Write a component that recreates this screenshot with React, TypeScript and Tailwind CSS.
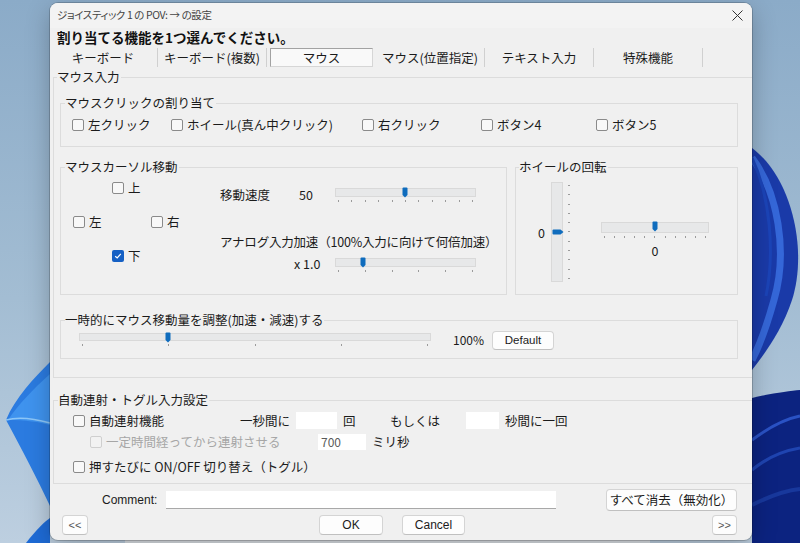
import React from "react";

function Box({ checked = false, disabled = false }: { checked?: boolean; disabled?: boolean }) {
  if (checked) {
    return (
      <span className="w-[12px] h-[12px] rounded-[2px] bg-[#1560c4] flex items-center justify-center shrink-0">
        <svg width="8" height="8" viewBox="0 0 8 8">
          <path d="M1.2 4.2 L3.2 6 L6.8 1.8" stroke="white" strokeWidth="1.2" fill="none" />
        </svg>
      </span>
    );
  }
  return (
    <span
      className={`w-[12px] h-[12px] rounded-[2px] border shrink-0 ${
        disabled ? "border-[#cfcfcf] bg-[#f2f2f2]" : "border-[#8a8a8a] bg-[#f8f8f8]"
      }`}
    />
  );
}

function Check({
  label,
  checked,
  disabled,
  className = "",
}: {
  label: string;
  checked?: boolean;
  disabled?: boolean;
  className?: string;
}) {
  return (
    <div className={`flex items-center gap-[4px] h-[16px] shrink-0 ${className}`}>
      <Box checked={checked} disabled={disabled} />
      <span className={`text-[12.5px] leading-[16px] whitespace-nowrap ${disabled ? "text-[#a6a6a6]" : "text-[#1b1b1b]"}`}>
        {label}
      </span>
    </div>
  );
}

function Group({
  label,
  className = "",
  labelClass = "left-[4px]",
  children,
}: {
  label: string;
  className?: string;
  labelClass?: string;
  children?: React.ReactNode;
}) {
  return (
    <div className={`relative border border-[#dcdcdc] shrink-0 ${className}`}>
      <span className={`absolute -top-[9px] bg-[#f0f0f0] pr-[1px] text-[12.5px] leading-[16px] whitespace-nowrap ${labelClass}`}>
        {label}
      </span>
      {children}
    </div>
  );
}

function HSlider({
  className,
  trackClass = "h-[9px]",
  pos,
  ticks,
}: {
  className: string;
  trackClass?: string;
  pos: number;
  ticks: number;
}) {
  return (
    <div className={`relative shrink-0 ${className}`}>
      <div className={`bg-[#e7e8e9] border border-[#d9d9d9] ${trackClass}`} />
      <svg className="absolute -top-[1px]" style={{ left: pos - 3 }} width="6" height="11" viewBox="0 0 6 11">
        <path d="M0.5 1.5 Q0.5 0.5 1.5 0.5 H4.5 Q5.5 0.5 5.5 1.5 V8 L3 10.5 L0.5 8 Z" fill="#0f6cbd" />
      </svg>
      <div className="flex justify-between px-[3px] mt-[3px]">
        {Array.from({ length: ticks }).map((_, i) => (
          <span key={i} className="w-px h-[2px] bg-[#9b9b9b]" />
        ))}
      </div>
    </div>
  );
}

function Btn({ className, children }: { className: string; children: React.ReactNode }) {
  return (
    <div
      className={`flex items-center justify-center bg-[#fdfdfd] border border-[#d4d4d4] border-b-[#c0c0c0] rounded-[4px] shrink-0 ${className}`}
    >
      {children}
    </div>
  );
}

function Wallpaper() {
  return (
    <svg className="absolute inset-0" width="800" height="543" viewBox="0 0 800 543">
      {/* right petal */}
      <path d="M752 148 C792 178 808 250 792 300 C782 330 766 352 752 370 Z" fill="#1a3aa8" />
      <path d="M752 158 C778 192 788 252 774 300 C767 325 760 345 752 360" stroke="#3567d8" strokeWidth="7" fill="none" />
      <path d="M752 158 C770 196 775 252 766 296" stroke="#1b44b8" strokeWidth="3" fill="none" />
      {/* bottom right */}
      <path d="M752 398 C772 393 790 391 800 390 L800 543 L752 543 Z" fill="#0c2380" />
      <path d="M752 440 C772 425 790 418 800 416" stroke="#2a52c4" strokeWidth="3" fill="none" />
      <path d="M752 470 C770 455 788 450 800 448" stroke="#1f44b0" strokeWidth="3" fill="none" />
      <path d="M752 505 C772 495 790 490 800 489" stroke="#18389c" strokeWidth="4" fill="none" />
      {/* left petal */}
      <path d="M50 362 C34 378 15 398 6 420 C20 446 38 480 50 506 Z" fill="#2b7be0" />
      <path d="M50 374 C32 390 18 405 8 420 C25 420 40 422 50 425 Z" fill="#3f93ee" />
      <path d="M6 420 C20 416 36 419 50 423" stroke="#8cc6f7" strokeWidth="1.5" fill="none" />
      <path d="M26 543 C36 530 44 522 50 518 L50 543 Z" fill="#1e6bd6" />
    </svg>
  );
}

export default function App() {
  return (
    <div className="relative w-[800px] h-[543px] overflow-hidden bg-[linear-gradient(180deg,#8babc8_0%,#a3bdd3_55%,#bdcfe0_100%)] font-['Noto_Sans_CJK_JP','Noto_Sans',sans-serif] text-[#1b1b1b]">
      <Wallpaper />
      <div className="absolute left-[125px] top-[538px] w-[525px] h-[10px] bg-[#dde2e7]" />

      {/* dialog window */}
      <div className="absolute left-[50px] top-[3px] w-[702px] h-[537px] rounded-[8px] overflow-hidden bg-[#f0f0f0] shadow-[0_0_0_1px_rgba(0,0,0,0.18),0_8px_24px_rgba(0,0,0,0.25)] flex flex-col">
        {/* title bar */}
        <div className="h-[25px] shrink-0 bg-[#f3f3f3] flex items-center justify-between pl-[7px] pr-[9px]">
          <span className="text-[10.5px] leading-[14px] text-[#444] [font-feature-settings:'palt'] tracking-[-0.4px] -mt-[1px]">
            ジョイスティック 1 の POV: → の設定
          </span>
          <svg width="11" height="11" viewBox="0 0 11 11" className="-mt-[1px]">
            <path d="M0.5 0.5 L10.5 10.5 M10.5 0.5 L0.5 10.5" stroke="#333" strokeWidth="1" />
          </svg>
        </div>

        {/* heading */}
        <div className="h-[19px] shrink-0 pl-[7px] text-[13.5px] leading-[19px] font-bold text-[#111]">
          割り当てる機能を1つ選んでください。
        </div>

        {/* tabs */}
        <div className="mt-[1px] ml-[-1px] h-[19px] shrink-0 flex text-[12.5px] leading-[16px]">
          <div className="w-[109px] flex items-center justify-center border-r border-[#d0d0d0]">キーボード</div>
          <div className="w-[109px] flex items-center justify-center border-r border-[#d0d0d0]">キーボード(複数)</div>
          <div className="w-[109px] flex items-center">
            <div className="ml-[3px] w-[103px] h-[19px] flex items-center justify-center border border-[#a2a2a2] border-r-[#d6d6d6] border-b-[#d6d6d6] bg-[#f9f9f9]">
              マウス
            </div>
          </div>
          <div className="w-[109px] flex items-center justify-center border-r border-[#d0d0d0]">マウス(位置指定)</div>
          <div className="w-[109px] flex items-center justify-center border-r border-[#d0d0d0]">テキスト入力</div>
          <div className="w-[109px] flex items-center justify-center border-r border-[#d0d0d0]">特殊機能</div>
        </div>

        {/* マウス入力 outer group */}
        <Group label="マウス入力" className="mt-[10px] ml-[3px] w-[701px] h-[301px] flex flex-col" labelClass="left-[3px]">
          {/* click assignment */}
          <Group label="マウスクリックの割り当て" className="mt-[25px] ml-[6px] w-[678px] h-[44px]">
            <div className="mt-[13px] pl-[11px] flex">
              <Check label="左クリック" className="w-[99px]" />
              <Check label="ホイール(真ん中クリック)" className="w-[191px]" />
              <Check label="右クリック" className="w-[119px]" />
              <Check label="ボタン4" className="w-[115px]" />
              <Check label="ボタン5" />
            </div>
          </Group>

          {/* cursor + wheel */}
          <div className="mt-[20px] ml-[6px] flex gap-[8px]">
            <Group label="マウスカーソル移動" className="w-[447px] h-[128px] flex">
              <div className="w-[159px] shrink-0 pl-[12px] pt-[12px]">
                <div className="grid grid-cols-[39px_39px_39px] grid-rows-[16px_16px_16px] gap-y-[18px]">
                  <div />
                  <Check label="上" />
                  <div />
                  <Check label="左" />
                  <div />
                  <Check label="右" />
                  <div />
                  <Check label="下" checked />
                  <div />
                </div>
              </div>
              <div className="flex-1 pt-[19px] text-[12.5px] leading-[16px]">
                <div className="h-[20px] flex items-start">
                  <span className="w-[79px] shrink-0">移動速度</span>
                  <span className="w-[36px] shrink-0">50</span>
                  <HSlider className="w-[141px] mt-[1px]" pos={70} ticks={11} />
                </div>
                <div className="mt-[27px] whitespace-nowrap tracking-[-0.2px]">アナログ入力加速（100%入力に向けて何倍加速）</div>
                <div className="mt-[6px] flex items-start pl-[74px]">
                  <span className="w-[41px] shrink-0">x 1.0</span>
                  <HSlider className="w-[141px] mt-[2px]" pos={28} ticks={6} />
                </div>
              </div>
            </Group>

            <Group label="ホイールの回転" className="w-[223px] h-[128px] flex items-start pt-[14px]" labelClass="left-[3px]">
              <div className="w-[35px] shrink-0 pr-[6px] mt-[43px] text-right text-[12.5px] leading-[16px]">0</div>
              <div className="relative w-[12px] h-[100px] shrink-0 bg-[#e7e8e9] border border-[#d9d9d9]">
                <svg className="absolute left-[0px] top-[46px]" width="12" height="6" viewBox="0 0 12 6">
                  <path d="M1.5 0.5 H8.5 L11.5 3 L8.5 5.5 H1.5 Q0.5 5.5 0.5 4.5 V1.5 Q0.5 0.5 1.5 0.5 Z" fill="#0f6cbd" />
                </svg>
              </div>
              <div className="ml-[5px] mt-[3px] h-[94px] flex flex-col justify-between shrink-0">
                {Array.from({ length: 11 }).map((_, i) => (
                  <span key={i} className="w-[2px] h-px bg-[#9b9b9b]" />
                ))}
              </div>
              <div className="ml-[31px] mt-[40px] w-[108px] shrink-0">
                <HSlider className="w-[108px]" trackClass="h-[11px]" pos={54} ticks={11} />
                <div className="mt-[5px] text-center text-[12.5px] leading-[16px]">0</div>
              </div>
            </Group>
          </div>

          {/* temporary adjust */}
          <Group label="一時的にマウス移動量を調整(加速・減速)する" className="mt-[25px] ml-[6px] w-[678px] h-[39px]" labelClass="left-[4px]">
            <div className="pl-[18px] pt-[11px] flex items-start">
              <HSlider className="w-[352px] mt-[1px]" trackClass="h-[8px]" pos={89} ticks={5} />
              <span className="ml-[22px] w-[39px] shrink-0 text-[12px] leading-[16px]">100%</span>
              <Btn className="w-[62px] h-[19px] -mt-[1px] font-['Liberation_Sans',sans-serif] text-[11.5px]">Default</Btn>
            </div>
          </Group>
        </Group>

        {/* auto fire group */}
        <Group label="自動連射・トグル入力設定" className="mt-[22px] ml-[3px] w-[701px] h-[84px] flex flex-col">
          <div className="mt-[11px] pl-[19px] flex items-center h-[17px] text-[12.5px] leading-[16px]">
            <Check label="自動連射機能" className="w-[167px]" />
            <span className="w-[56px] shrink-0">一秒間に</span>
            <div className="w-[41px] h-[17px] bg-white shrink-0" />
            <span className="ml-[6px] w-[47px] shrink-0">回</span>
            <span className="w-[76px] shrink-0">もしくは</span>
            <div className="w-[33px] h-[17px] bg-white shrink-0" />
            <span className="ml-[6px]">秒間に一回</span>
          </div>
          <div className="mt-[5px] pl-[36px] flex items-center h-[16px] text-[12.5px] leading-[16px]">
            <Check label="一定時間経ってから連射させる" disabled className="w-[228px]" />
            <div className="w-[48px] h-[16px] bg-white shrink-0 pl-[3px] text-[12px] leading-[16px] text-[#5a5a5a]">700</div>
            <span className="ml-[6px]">ミリ秒</span>
          </div>
          <div className="mt-[9px] pl-[19px] flex items-center h-[16px]">
            <Check label="押すたびに ON/OFF 切り替え（トグル）" />
          </div>
        </Group>

        {/* comment row */}
        <div className="mt-[5px] h-[22px] shrink-0 pl-[52px] flex items-center">
          <span className="w-[64px] shrink-0 font-['Liberation_Sans',sans-serif] text-[12px] leading-[16px]">Comment:</span>
          <div className="w-[390px] h-[18px] bg-white border-b border-[#a8a8a8] shrink-0" />
          <Btn className="ml-[50px] w-[131px] h-[22px] text-[12.5px] leading-[16px]">すべて消去（無効化）</Btn>
        </div>

        {/* button row */}
        <div className="mt-[4px] h-[20px] shrink-0 pl-[12px] flex items-center">
          <Btn className="w-[26px] h-[20px] font-['Liberation_Sans',sans-serif] text-[11px] text-[#555]">&lt;&lt;</Btn>
          <Btn className="ml-[231px] w-[64px] h-[20px] font-['Liberation_Sans',sans-serif] text-[12px]">OK</Btn>
          <Btn className="ml-[19px] w-[63px] h-[20px] font-['Liberation_Sans',sans-serif] text-[12px]">Cancel</Btn>
          <Btn className="ml-[247px] w-[25px] h-[20px] font-['Liberation_Sans',sans-serif] text-[11px] text-[#555]">&gt;&gt;</Btn>
        </div>
      </div>
    </div>
  );
}
